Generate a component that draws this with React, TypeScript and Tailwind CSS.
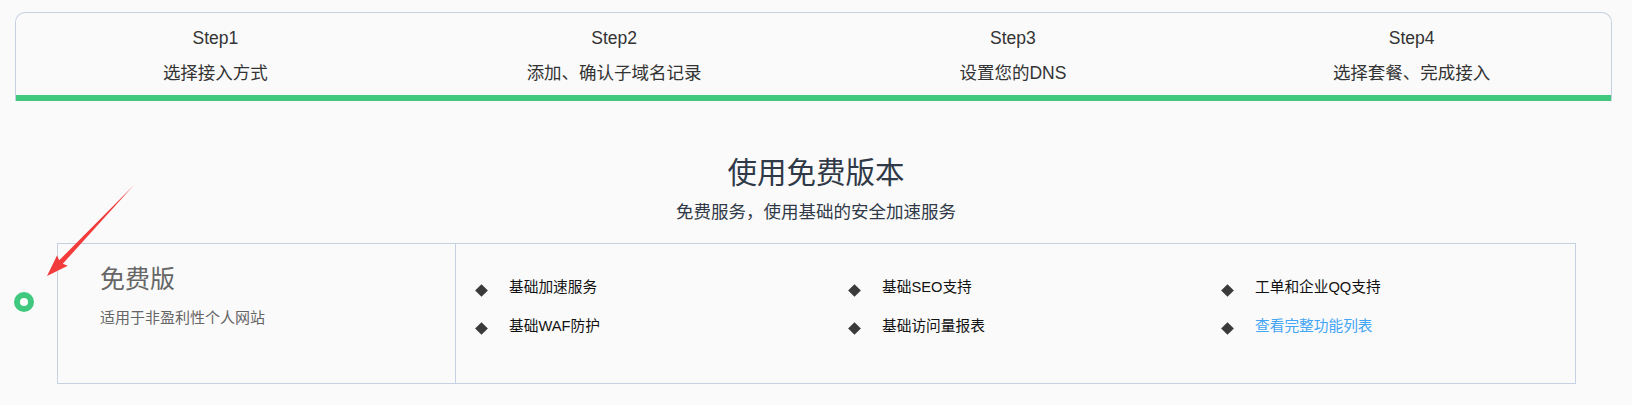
const steps = [
  { no: "Step1", name: "选择接入方式" },
  { no: "Step2", name: "添加、确认子域名记录" },
  { no: "Step3", name: "设置您的DNS" },
  { no: "Step4", name: "选择套餐、完成接入" },
];

const features = [
  { text: "基础加速服务" },
  { text: "基础SEO支持" },
  { text: "工单和企业QQ支持" },
  { text: "基础WAF防护" },
  { text: "基础访问量报表" },
  { text: "查看完整功能列表", link: true },
];

export default function App() {
  return (
    <div className="relative min-h-[405px] bg-[#fafafa] text-[#333] font-['Liberation_Sans','Noto_Sans_CJK_SC',sans-serif]">
      {/* steps */}
      <div className="pt-3 pl-[15px] pr-[20px]">
        <div className="rounded-t-[10px] border border-b-0 border-[#c5d1e0] overflow-hidden">
          <div className="grid grid-cols-4 h-[82px] pt-[13px]">
            {steps.map((s) => (
              <div key={s.no} className="flex flex-col items-center text-[17.5px] leading-[24px] text-[#333]">
                <div>{s.no}</div>
                <div className="mt-[11px]">{s.name}</div>
              </div>
            ))}
          </div>
          <div className="h-[6px] bg-[#40c87e]" />
        </div>
      </div>

      {/* heading */}
      <div className="mt-[52px] flex flex-col items-center text-[#2f3947]">
        <h2 className="text-[29.5px] leading-[40px]">使用免费版本</h2>
        <p className="mt-[6px] text-[17.5px] leading-[26px]">免费服务，使用基础的安全加速服务</p>
      </div>

      {/* plan */}
      <div className="mt-[18px] flex items-start pl-[14px]">
        <div className="mt-[49px] h-5 w-5 rounded-full border-[6px] border-[#40c87e] bg-white" />
        <div className="ml-[23px] flex h-[141px] w-[1519px] border border-[#c5d1e0]">
          <div className="w-[398px] border-r border-[#c5d1e0] pl-[42px] pt-[19px]">
            <div className="text-[25px] leading-[32px] text-[#666]">免费版</div>
            <div className="mt-[12px] text-[15px] leading-[22px] text-[#666]">适用于非盈利性个人网站</div>
          </div>
          <div className="grid flex-1 grid-cols-3 content-start gap-y-[14.7px] pt-[31px]">
            {features.map((f) => (
              <div key={f.text} className="flex items-center h-[24px]">
                <span className="ml-[21px] mt-[6px] h-[9px] w-[9px] rotate-45 bg-[#3a3a3a]" />
                <span
                  className={
                    f.link
                      ? "ml-[23px] text-[14.7px] text-[#42a5f5] cursor-pointer"
                      : "ml-[23px] text-[14.7px] text-[#111]"
                  }
                >
                  {f.text}
                </span>
              </div>
            ))}
          </div>
        </div>
      </div>

      {/* annotation arrow */}
      <svg className="pointer-events-none absolute left-0 top-0" width="150" height="290" viewBox="0 0 150 290">
        <polygon
          points="134,185 62.8,263.7 67.8,265.8 47,276 57,255.4 59.2,260.3"
          fill="#f23b3b"
        />
      </svg>
    </div>
  );
}
